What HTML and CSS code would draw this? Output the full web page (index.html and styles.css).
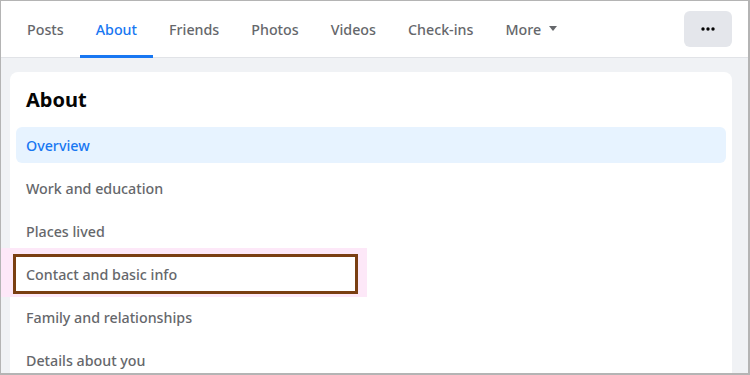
FILE: index.html
```html
<!DOCTYPE html>
<html>
<head>
  <title>About</title>
  <meta name="viewport" content="width=device-width, initial-scale=1">
  <link rel="stylesheet" href="styles.css">
</head>
<body>
  <div class="frame">
    <div class="tabs">
      <a class="tab">Posts</a>
      <a class="tab active">About</a>
      <a class="tab">Friends</a>
      <a class="tab">Photos</a>
      <a class="tab">Videos</a>
      <a class="tab">Check-ins</a>
      <a class="tab">More
        <svg class="caret" width="8" height="6" viewBox="0 0 8 6"><path d="M0 0h8L4 5z" fill="#65676b"/></svg>
      </a>
      <div class="spacer"></div>
      <button class="menu-btn">
        <svg width="14" height="4" viewBox="0 0 14 4"><circle cx="2" cy="2" r="1.7" fill="#050505"/><circle cx="7" cy="2" r="1.7" fill="#050505"/><circle cx="12" cy="2" r="1.7" fill="#050505"/></svg>
      </button>
    </div>
    <div class="main">
      <div class="card">
        <h2 class="card-title">About</h2>
        <ul class="side-list">
          <li class="item selected">Overview</li>
          <li class="item">Work and education</li>
          <li class="item">Places lived</li>
          <li class="item marked">
            <span class="glow"></span>
            <span class="outline"></span>
            <span class="label">Contact and basic info</span>
          </li>
          <li class="item">Family and relationships</li>
          <li class="item">Details about you</li>
        </ul>
      </div>
    </div>
  </div>
</body>
</html>
```

FILE: styles.css
```css
* {
  box-sizing: border-box;
}

body {
  margin: 0;
  font-family: "Noto Sans", "Open Sans", Arial, sans-serif;
}

.frame {
  width: 750px;
  height: 375px;
  border: 1px solid #b4b4b4;
  border-right-width: 2px;
  border-bottom-width: 2px;
  overflow: hidden;
  background: #f0f2f5;
}

.tabs {
  display: flex;
  align-items: center;
  height: 57px;
  padding: 0 16px 0 10px;
  background: #fff;
  border-bottom: 1px solid #e1e3e7;
}

.tab {
  position: relative;
  display: flex;
  align-items: center;
  height: 56px;
  padding: 0 16px;
  font-size: 14.25px;
  font-weight: 500;
  color: #65676b;
}

.tab.active {
  color: #1877f2;
}

.tab.active::after {
  content: "";
  position: absolute;
  left: 0;
  right: 0;
  bottom: -1px;
  height: 3px;
  background: #1877f2;
}

.caret {
  margin-left: 8px;
}

.spacer {
  flex: 1;
}

.menu-btn {
  width: 48px;
  height: 36px;
  border: none;
  border-radius: 6px;
  background: #e4e6eb;
  display: flex;
  align-items: center;
  justify-content: center;
  padding: 0;
}

.main {
  padding: 14px 16px 0 9px;
}

.card {
  background: #fff;
  border-radius: 8px;
  padding: 16px 6px 0;
  height: 320px;
}

.card-title {
  margin: 0 0 15px;
  padding-left: 10px;
  font-size: 20px;
  line-height: 24px;
  font-weight: 700;
  color: #050505;
}

.side-list {
  list-style: none;
  margin: 0;
  padding: 0;
}

.item {
  position: relative;
  height: 36px;
  margin-bottom: 7px;
  padding: 0 10px;
  display: flex;
  align-items: center;
  border-radius: 6px;
  font-size: 14.25px;
  font-weight: 500;
  color: #65676b;
}

.item.selected {
  background: #e7f3ff;
  color: #1877f2;
}

.glow {
  position: absolute;
  left: -16px;
  top: -8px;
  width: 367px;
  height: 49px;
  background: #fde8f8;
}

.outline {
  position: absolute;
  left: -3px;
  top: -2px;
  width: 345px;
  height: 40px;
  border: 3px solid #7a3f12;
  background: #fff;
}

.label {
  position: relative;
}
```
